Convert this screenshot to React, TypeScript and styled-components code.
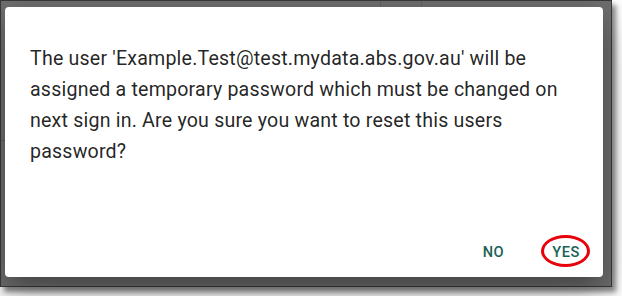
import React from "react";
import styled, { createGlobalStyle } from "styled-components";

const Global = createGlobalStyle`
  html, body { margin: 0; padding: 0; background: #ffffff; }
  body { width: 622px; height: 296px; overflow: hidden; }
`;

const Frame = styled.div`
  position: relative;
  box-sizing: border-box;
  width: 612px;
  height: 287px;
  border: 1px solid #3a3a3a;
  background-color: #6f6f6f;
  background-image:
    linear-gradient(#626262, #626262),
    linear-gradient(#626262, #626262),
    linear-gradient(#626262, #626262);
  background-size: 1px 8px, 1px 8px, 6px 1px;
  background-position: 379px 0, 420px 0, 0 139px;
  background-repeat: no-repeat;
  box-shadow: 4px 5px 5px rgba(0, 0, 0, 0.45);
  padding: 6px 8px 9px 4px;
`;

const Dialog = styled.div`
  box-sizing: border-box;
  width: 100%;
  height: 100%;
  background: #ffffff;
  border-radius: 4px;
  box-shadow: 0 11px 15px -7px rgba(0, 0, 0, 0.2),
    0 24px 38px 3px rgba(0, 0, 0, 0.14), 0 9px 46px 8px rgba(0, 0, 0, 0.12);
  display: flex;
  flex-direction: column;
  justify-content: space-between;
  padding: 36px 15px 9px 25px;
`;

const Message = styled.p`
  margin: 0;
  max-width: 555px;
  font-family: Roboto, "Liberation Sans", sans-serif;
  font-size: 19.6px;
  line-height: 31px;
  color: rgba(0, 0, 0, 0.87);
  letter-spacing: 0.01em;
`;

const Actions = styled.div`
  display: flex;
  justify-content: flex-end;
  align-items: center;
  gap: 32px;
`;

const ActionButton = styled.button`
  position: relative;
  border: none;
  background: transparent;
  padding: 7px 8px;
  font-family: Roboto, "Liberation Sans", sans-serif;
  font-weight: 500;
  font-size: 14.6px;
  letter-spacing: 0.04em;
  text-transform: uppercase;
  color: #1a6253;
  cursor: pointer;
`;

const Highlight = styled.span`
  position: absolute;
  box-sizing: border-box;
  left: -3px;
  top: -1px;
  width: 49px;
  height: 32px;
  border: 3px solid #e8000b;
  border-radius: 50%;
  pointer-events: none;
`;

export default function App() {
  return (
    <>
      <Global />
      <Frame>
        <Dialog>
          <Message>
            The user 'Example.Test@test.mydata.abs.gov.au' will be assigned a
            temporary password which must be changed on next sign in. Are you
            sure you want to reset this users password?
          </Message>
          <Actions>
            <ActionButton>No</ActionButton>
            <ActionButton>
              Yes
              <Highlight />
            </ActionButton>
          </Actions>
        </Dialog>
      </Frame>
    </>
  );
}
